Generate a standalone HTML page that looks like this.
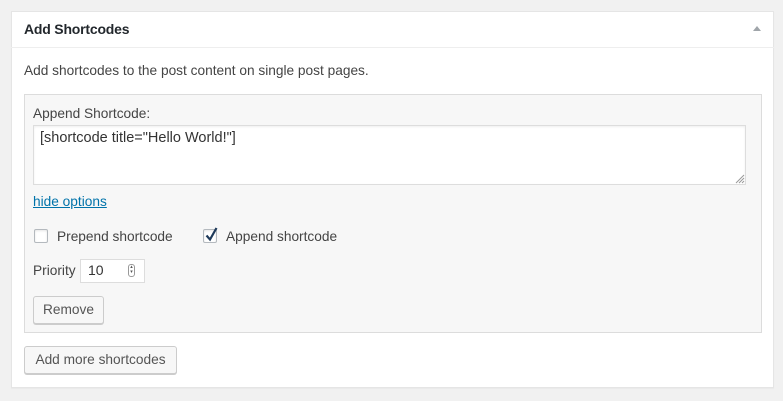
<!DOCTYPE html>
<html><head><style>
*{box-sizing:border-box;margin:0;padding:0}
body{width:783px;height:401px;background:#f1f1f1;font-family:"Liberation Sans",sans-serif;font-size:13.7px;color:#444;position:relative;overflow:hidden}
.a{position:absolute}
.panel{left:11px;top:11px;width:763px;height:377px;background:#fff;border:1px solid #e5e5e5;box-shadow:0 1px 1px rgba(0,0,0,.04)}
.hd{left:11px;top:47px;width:763px;height:1px;background:#eee}
.box{left:24px;top:94px;width:738px;height:239px;background:#f7f7f7;border:1px solid #dcdcdc}
.ta{left:33px;top:125px;width:713px;height:60px;background:#fff;border:1px solid #ddd;box-shadow:inset 0 1px 2px rgba(0,0,0,.07)}
.cb{width:14px;height:14px;border:1px solid #b4b9be;background:#fff;border-radius:2px;box-shadow:inset 0 1px 2px rgba(0,0,0,.1)}
.btn{background:#f7f7f7;border:1px solid #ccc;border-radius:3px;box-shadow:0 1px 0 #ccc;color:#555;text-align:center}
</style></head><body>
<div class="a panel"></div>
<div class="a hd"></div>
<div class="a" style="left:24px;top:21px;font-size:14px;font-weight:bold;color:#23282d;letter-spacing:-0.2px">Add Shortcodes</div>
<div class="a" style="left:753px;top:26px;width:0;height:0;border-left:4px solid transparent;border-right:4px solid transparent;border-bottom:5px solid #a0a5aa"></div>
<div class="a" style="left:24px;top:63px">Add shortcodes to the post content on single post pages.</div>
<div class="a box"></div>
<div class="a" style="left:33px;top:106px">Append Shortcode:</div>
<div class="a ta"></div>
<div class="a" style="left:40px;top:130px;color:#333;font-size:14.5px">[shortcode title="Hello World!"]</div>
<svg class="a" style="left:733px;top:172px" width="12" height="12"><path d="M11 3L3 11M11 6L6 11M11 9L9 11" stroke="#999" stroke-width="1"/></svg>
<div class="a" style="left:33px;top:194px;color:#0073aa;text-decoration:underline">hide options</div>
<div class="a cb" style="left:34px;top:229px"></div>
<div class="a" style="left:57px;top:229px">Prepend shortcode</div>
<div class="a cb" style="left:203px;top:229px"></div>
<svg class="a" style="left:203px;top:226px" width="16" height="18"><path d="M3.5 9.5l3.5 4L13.5 2" stroke="#1e3a5a" stroke-width="2.2" fill="none"/></svg>
<div class="a" style="left:226px;top:229px">Append shortcode</div>
<div class="a" style="left:33px;top:263px">Priority</div>
<div class="a" style="left:80px;top:259px;width:65px;height:24px;background:#fff;border:1px solid #ddd"></div>
<div class="a" style="left:88px;top:262px;font-size:14px;color:#333">10</div>
<div class="a" style="left:128px;top:264px;width:7px;height:13px;border:1px solid #999;border-radius:3px;font-size:5px;line-height:5px;text-align:center;color:#555">▴<br>▾</div>
<div class="a btn" style="left:33px;top:296px;width:71px;height:28px;line-height:26px">Remove</div>
<div class="a btn" style="left:24px;top:346px;width:153px;height:28px;line-height:26px">Add more shortcodes</div>
</body></html>
